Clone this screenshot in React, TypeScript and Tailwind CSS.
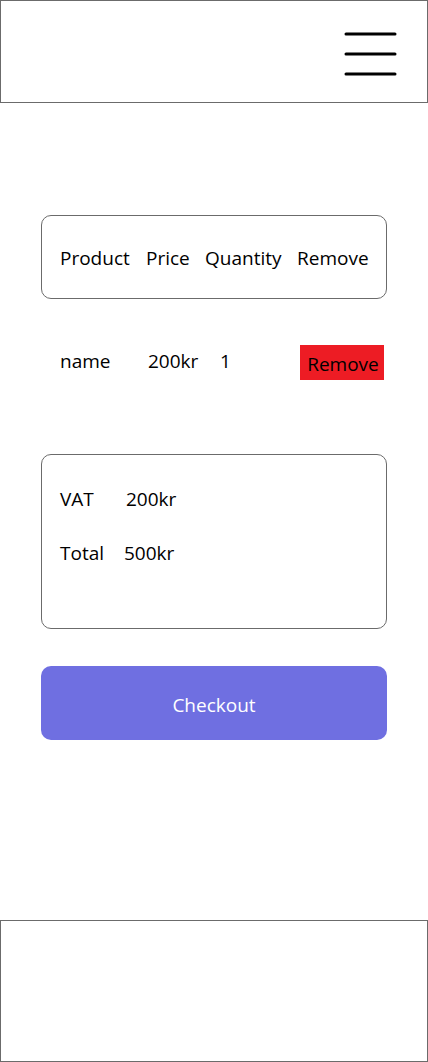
const font = { fontFamily: '"Open Sans", "Noto Sans", sans-serif' };

const MenuIcon = () => (
  <svg width="54" height="46" viewBox="0 0 54 46" fill="none">
    <path d="M2 3h49M2 23h49M2 43h49" stroke="#000" strokeWidth="3" strokeLinecap="round" />
  </svg>
);

export default function App() {
  return (
    <div className="w-[428px] h-[1062px] bg-white flex flex-col text-black" style={font}>
      <header className="h-[103px] border border-[#6b6b6b] flex items-center justify-end pr-[29px] pt-[4px]">
        <MenuIcon />
      </header>

      <main className="flex flex-col px-[41px] pt-[112px] flex-1">
        <div className="w-[346px] h-[84px] border border-[#6b6b6b] rounded-[10px] flex items-center pl-[18px] pt-[3px] text-[19px]">
          <span className="w-[86px]">Product</span>
          <span className="w-[59px]">Price</span>
          <span className="w-[92px]">Quantity</span>
          <span>Remove</span>
        </div>

        <div className="mt-[46px] h-[35px] flex items-center pl-[19px] text-[19px]">
          <span className="w-[88px] -mt-[3px]">name</span>
          <span className="w-[72px] -mt-[3px]">200kr</span>
          <span className="w-[80px] -mt-[3px]">1</span>
          <button className="h-[35px] w-[84px] bg-[#ed1c24] text-[19px] text-black flex items-center justify-center pt-[3px] pl-[2px]">
            Remove
          </button>
        </div>

        <div className="mt-[74px] w-[346px] h-[175px] border border-[#6b6b6b] rounded-[10px] flex flex-col pl-[18px] pt-[30px] gap-[25px] text-[19px]">
          <div className="flex">
            <span className="w-[66px]">VAT</span>
            <span>200kr</span>
          </div>
          <div className="flex">
            <span className="w-[64px]">Total</span>
            <span>500kr</span>
          </div>
        </div>

        <button className="mt-[37px] w-[346px] h-[74px] bg-[#6f6fe1] rounded-[10px] text-white text-[19px] flex items-center justify-center pt-[4px]">
          Checkout
        </button>
      </main>

      <footer className="h-[142px] border border-[#6b6b6b]" />
    </div>
  );
}
